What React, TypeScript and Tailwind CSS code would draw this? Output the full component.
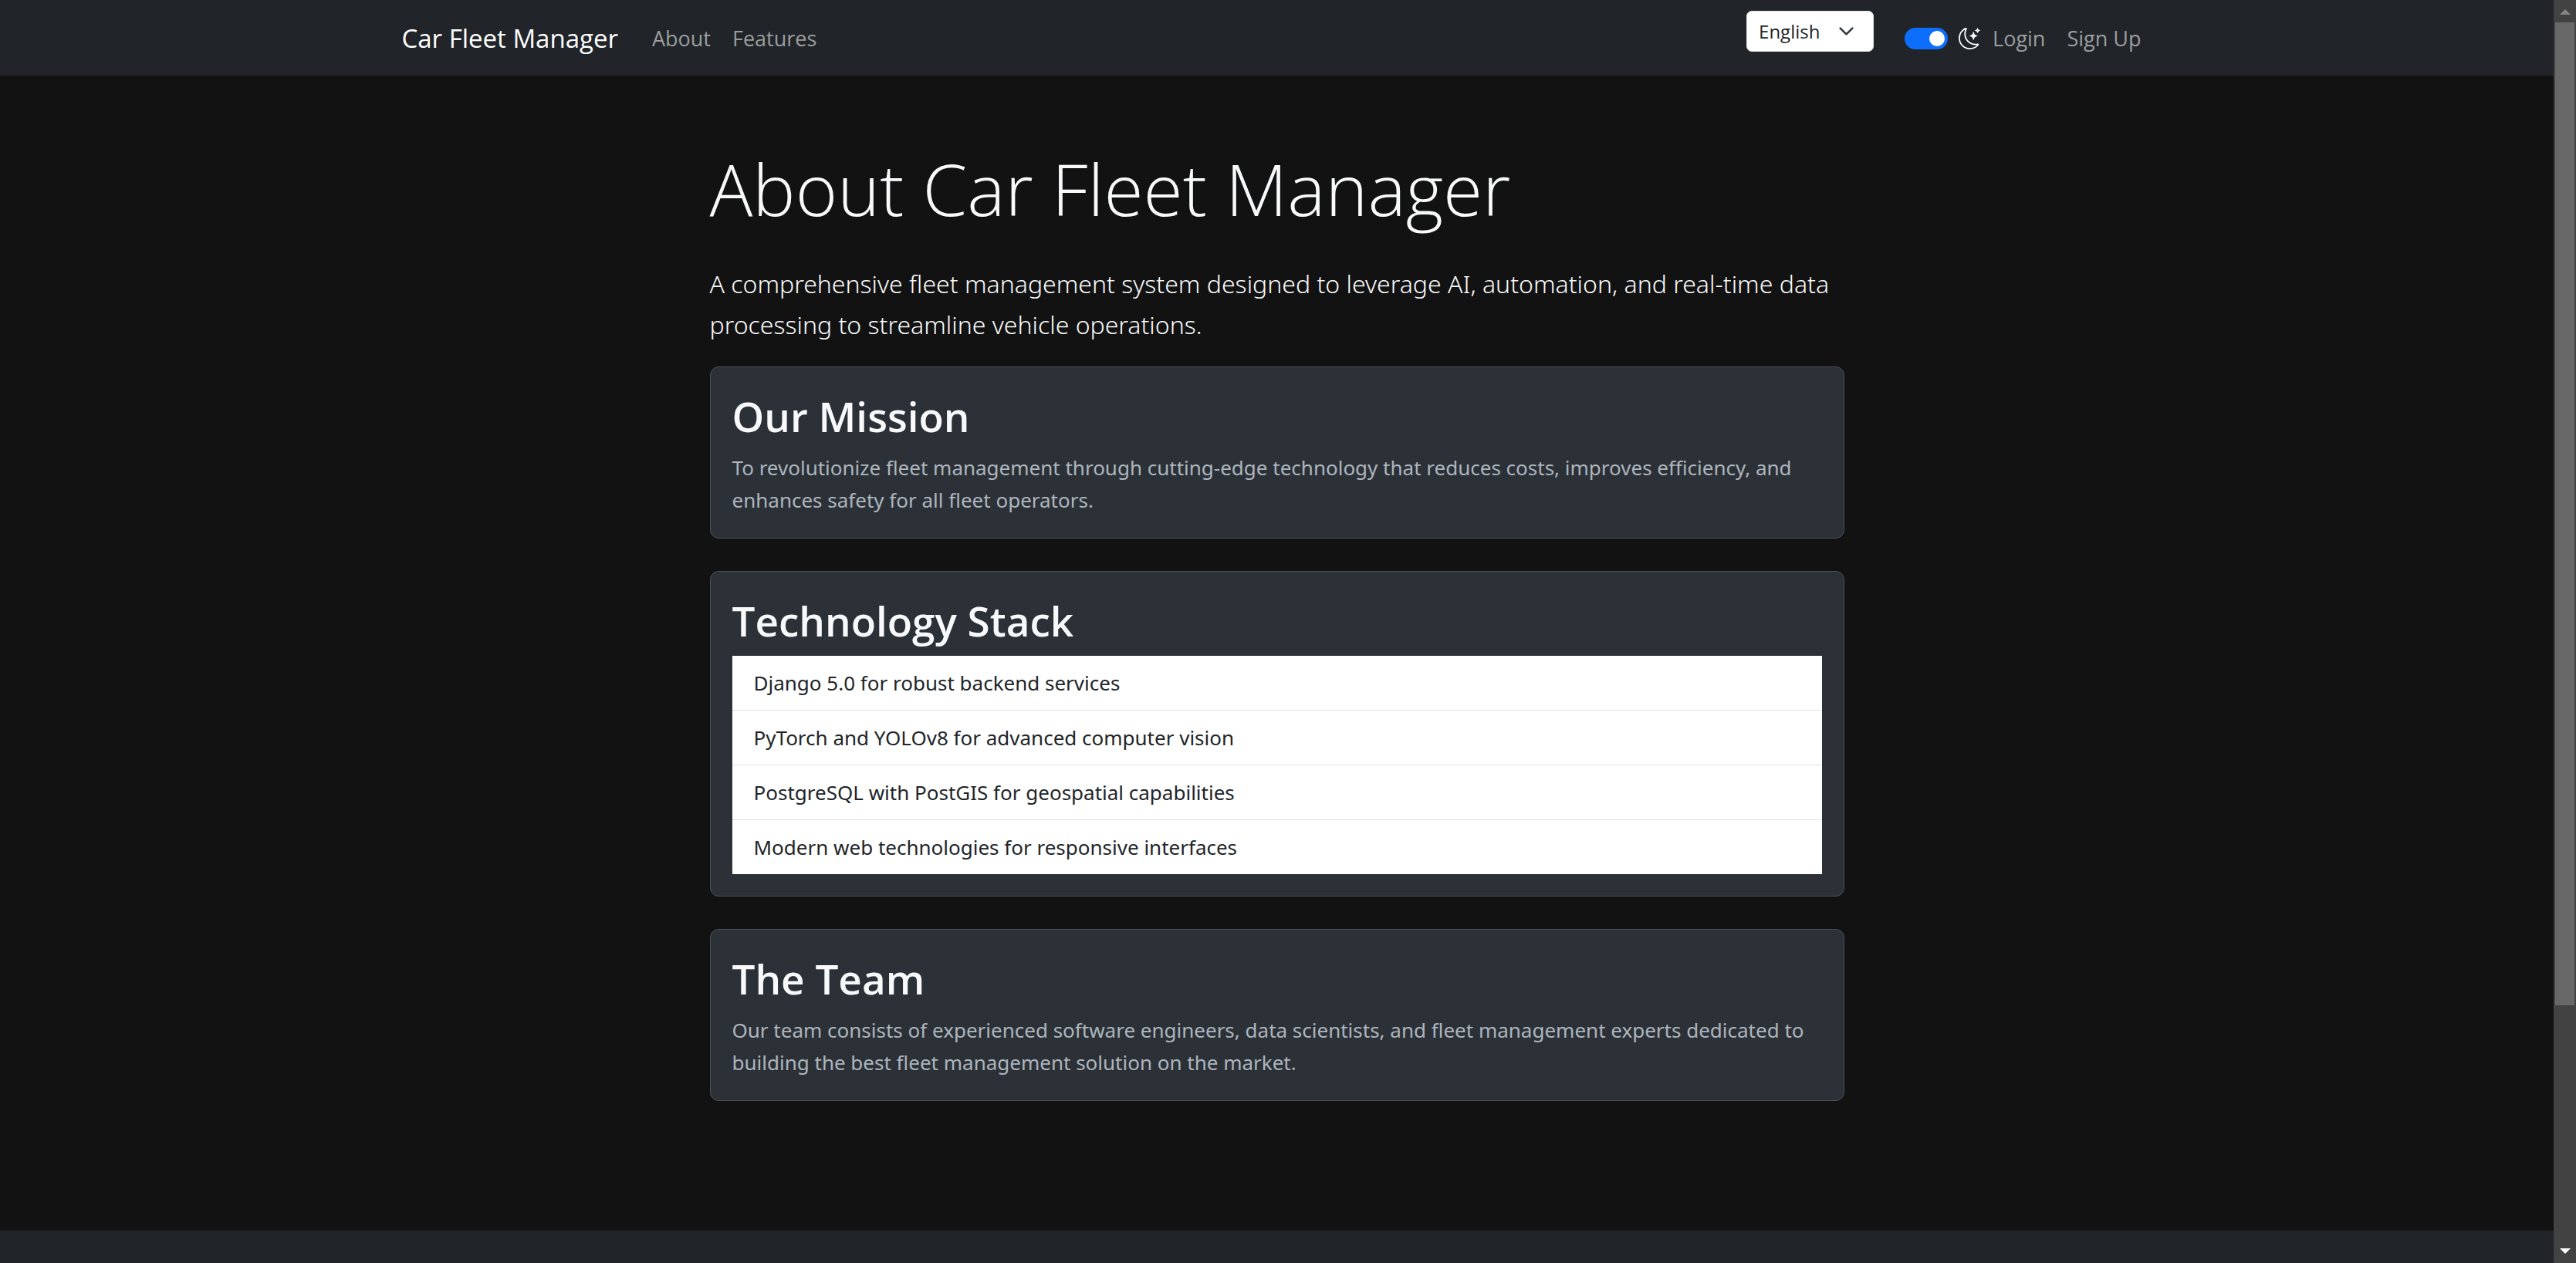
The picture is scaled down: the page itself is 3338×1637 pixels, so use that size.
import { useState } from "react";
import type { ReactNode } from "react";
import { BsMoonStars } from "react-icons/bs";

const technologies = [
  "Django 5.0 for robust backend services",
  "PyTorch and YOLOv8 for advanced computer vision",
  "PostgreSQL with PostGIS for geospatial capabilities",
  "Modern web technologies for responsive interfaces",
];

function NavLink({ children }: { children: ReactNode }) {
  return (
    <a href="#" className="px-[14px] text-[27px] leading-[42px] whitespace-nowrap text-[#9b9d9f]">
      {children}
    </a>
  );
}

function Navbar() {
  const [dark, setDark] = useState(true);
  return (
    <nav className="bg-[#212529] font-['Open_Sans',sans-serif]">
      <div className="mx-auto flex h-[98px] max-w-[2310px] items-center px-[21px] pt-[2px]">
        <a href="#" className="mr-[30px] text-[33px] leading-[52px] whitespace-nowrap text-white">
          Car Fleet Manager
        </a>
        <NavLink>About</NavLink>
        <NavLink>Features</NavLink>
        <div className="ml-auto flex items-center">
          <div className="relative mr-[40px] mb-[19px]">
            <select
              aria-label="Language"
              className="block h-[53px] w-[165px] appearance-none rounded-[7px] border border-[#dee2e6] bg-white pl-[15px] text-[24px] leading-[37px] text-[#212529]"
            >
              <option>English</option>
            </select>
            <svg
              viewBox="0 0 16 16"
              className="pointer-events-none absolute top-[16px] right-[25px] size-[21px]"
              fill="none"
              stroke="#343a40"
              strokeWidth="2"
              strokeLinecap="round"
              strokeLinejoin="round"
            >
              <path d="m2 5 6 6 6-6" />
            </svg>
          </div>
          <label className="mr-[2px] flex items-center gap-[14px] text-white">
            <input
              type="checkbox"
              role="switch"
              aria-label="Dark mode"
              checked={dark}
              onChange={() => setDark(!dark)}
              className="peer sr-only"
            />
            <span className="flex h-[28px] w-[56px] items-center rounded-full bg-[#6c757d] px-[4px] peer-checked:justify-end peer-checked:bg-[#0d6efd]">
              <span className="size-[20px] rounded-full bg-white" />
            </span>
            <BsMoonStars className="size-[28px]" />
          </label>
          <NavLink>Login</NavLink>
          <NavLink>Sign Up</NavLink>
        </div>
      </div>
    </nav>
  );
}

function Card({ title, children }: { title: string; children: ReactNode }) {
  return (
    <section className="mb-[42px] rounded-[11px] border border-[#495057] bg-[#2c3138] p-[28px]">
      <h2 className="mb-[12px] pt-[2px] font-['Open_Sans',sans-serif] text-[53px] leading-[67px] font-semibold text-[#f8f9fa]">
        {title}
      </h2>
      {children}
    </section>
  );
}

function Scrollbar() {
  return (
    <div aria-hidden="true" className="flex w-[29px] shrink-0 flex-col bg-[#424242]">
      <div className="flex h-[29px] items-center justify-center">
        <svg viewBox="0 0 14 7" className="mt-[2px] h-[7px] w-[14px]" fill="#868686">
          <path d="M7 0l7 7H0z" />
        </svg>
      </div>
      <div className="mx-[2px] grow-[1274] bg-[#686868]" />
      <div className="grow-[305]" />
      <div className="flex h-[29px] items-center justify-center">
        <svg viewBox="0 0 14 7" className="mb-[2px] h-[7px] w-[14px]" fill="#ffffff">
          <path d="M7 7L0 0h14z" />
        </svg>
      </div>
    </div>
  );
}

export default function App() {
  return (
    <div className="flex min-h-screen bg-[#121212] font-['Noto_Sans',sans-serif]">
      <div className="flex min-w-0 flex-1 flex-col">
        <Navbar />
        <main className="mx-auto w-full max-w-[1470px] pt-[88px] pb-[126px]">
          <h1 className="mb-[38px] font-['Open_Sans',sans-serif] text-[93px] leading-[117px] font-light text-[#f8f9fa]">
            About Car Fleet Manager
          </h1>
          <p className="mb-[28px] text-[32px] leading-[53px] font-light text-[#f8f9fa]">
            A comprehensive fleet management system designed to leverage AI, automation, and real-time data processing to
            streamline vehicle operations.
          </p>
          <Card title="Our Mission">
            <p className="text-[26px] leading-[42px] text-[#adb5bd]">
              To revolutionize fleet management through cutting-edge technology that reduces costs, improves efficiency,
              and enhances safety for all fleet operators.
            </p>
          </Card>
          <Card title="Technology Stack">
            <ul className="divide-y divide-[#dee2e6] bg-white">
              {technologies.map((item) => (
                <li key={item} className="px-[28px] py-[14px] text-[26px] leading-[42px] text-[#212529]">
                  {item}
                </li>
              ))}
            </ul>
          </Card>
          <Card title="The Team">
            <p className="text-[26px] leading-[42px] text-[#adb5bd]">
              Our team consists of experienced software engineers, data scientists, and fleet management experts
              dedicated to building the best fleet management solution on the market.
            </p>
          </Card>
        </main>
        <footer className="flex-1 bg-[#212529]" />
      </div>
      <Scrollbar />
    </div>
  );
}
